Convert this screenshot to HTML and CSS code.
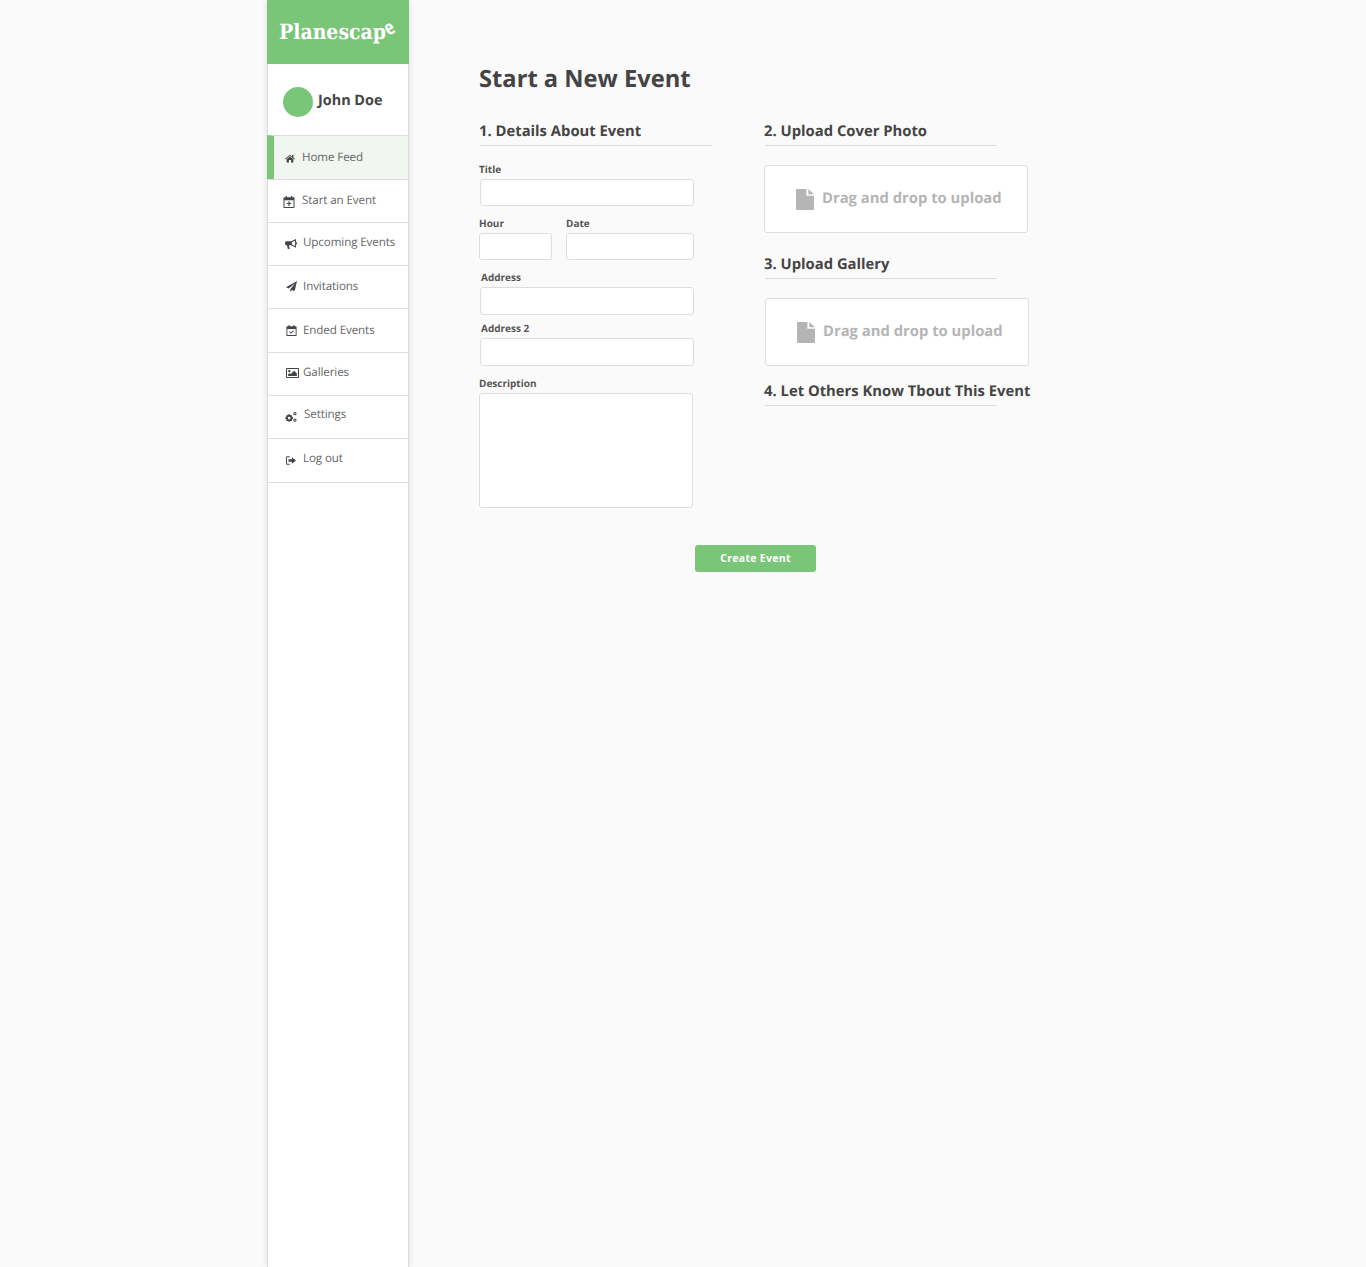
FILE: index.html
```html
<!DOCTYPE html>
<html lang="en">
<head>
    <meta charset="UTF-8">
    <title>Start a New Event</title>
    <link rel="stylesheet" href="styles.css">
</head>
<body>
    <div class="page">
        <aside class="sidebar">
            <div class="logo">Planescap<span class="logo-e">e</span></div>
            <div class="user">
                <span class="avatar"></span>
                <span class="user-name">John Doe</span>
            </div>
            <nav class="nav">
                <a class="nav-item item-home">
                    <svg class="icon" viewBox="0 0 14 12"><path d="M7 .6 0 6.500l.7.8L7 2l6.300 5.300.7-.8-2.200-1.900V1.200h-1.900v2L7 .6zM2.300 7.100V11.500h3.200V8.200h3V11.500h3.200V7.100L7 3.200 2.300 7.100z"/></svg>
                    Home Feed
                </a>
                <a class="nav-item item-start">
                    <svg class="icon" viewBox="0 0 12 13"><path fill-rule="evenodd" d="M2.500 0h1.300v1.400h4.400V0h1.300v1.400H11q1 0 1 1V12q0 1-1 1H1q-1 0-1-1V2.400q0-1 1-1h1.500V0zM1.100 4.600V11.900H10.900V4.600H1.100zM5.400 5.800H6.600V7.700H8.500V8.800H6.600V10.700H5.400V8.800H3.500V7.700H5.400V5.800z"/></svg>
                    Start an Event
                </a>
                <a class="nav-item item-upcoming">
                    <svg class="icon" viewBox="0 0 13 11"><path fill-rule="evenodd" d="M12 0 6.500 2.600H1.500Q0 2.600 0 4v1.500Q0 6.800 1.500 6.800H2L3 11H5L4.300 6.800H6.500L12 9.500zM11 1.800V7.800L7.500 6.100V3.400z"/><rect x="12" y="3.500" width="1" height="2.500"/></svg>
                    Upcoming Events
                </a>
                <a class="nav-item item-invitations">
                    <svg class="icon" viewBox="0 0 12 12"><path d="M12 0 0 6.900l3 1.300 7.200-6.100L4.700 9v3l1.900-2.300 2.900 1.200L12 0z"/></svg>
                    Invitations
                </a>
                <a class="nav-item item-ended">
                    <svg class="icon" viewBox="0 0 12 13"><path fill-rule="evenodd" d="M2.500 0h1.300v1.400h4.400V0h1.300v1.400H11q1 0 1 1V12q0 1-1 1H1q-1 0-1-1V2.400q0-1 1-1h1.500V0zM1.100 4.600V11.900H10.900V4.600H1.100zM3.200 8.200l.8-.8 1.400 1.400 2.700-2.700.8.800-3.500 3.500z"/></svg>
                    Ended Events
                </a>
                <a class="nav-item item-galleries">
                    <svg class="icon" viewBox="0 0 13 10"><path fill-rule="evenodd" d="M1 0H12Q13 0 13 1V9Q13 10 12 10H1Q0 10 0 9V1Q0 0 1 0zM1 1.100V8.900H12V1.100H1zM3.300 1.900A1.200 1.200 0 1 1 3.300 4.300 1.200 1.200 0 0 1 3.300 1.900zM2.100 7.900V6.500L3.700 5 4.800 6.100 8.100 2.800 10.900 5.600V7.900z"/></svg>
                    Galleries
                </a>
                <a class="nav-item item-settings">
                    <svg class="icon" viewBox="0 0 13 11"><path fill-rule="evenodd" d="M3.600 2.500H5.400L5.700 3.700 6.800 3.200 8 4.400 7.500 5.400 8.700 5.800V7.500L7.500 7.900 8 9 6.800 10.200 5.700 9.600 5.400 10.800H3.600L3.300 9.600 2.200 10.200 1 9 1.500 7.900.3 7.500V5.800L1.500 5.400 1 4.400 2.200 3.200 3.300 3.700zM4.500 5.200A1.500 1.500 0 1 0 4.500 8.200 1.500 1.500 0 0 0 4.500 5.200z"/><path fill-rule="evenodd" d="M10.800 0A1.800 1.800 0 1 1 10.800 3.600 1.800 1.800 0 0 1 10.800 0zM10.800 1.100A.7.7 0 1 0 10.800 2.500 .7.7 0 0 0 10.800 1.100zM10.800 7.200A1.800 1.800 0 1 1 10.800 10.800 1.800 1.800 0 0 1 10.800 7.200zM10.800 8.300A.7.7 0 1 0 10.800 9.700 .7.7 0 0 0 10.800 8.300z"/></svg>
                    Settings
                </a>
                <a class="nav-item item-logout">
                    <svg class="icon" viewBox="0 0 12 10"><path fill-rule="evenodd" d="M1.500 0H4.500V1.100H1.800Q1.100 1.100 1.100 1.800V8.200Q1.100 8.900 1.800 8.900H4.500V10H1.500Q0 10 0 8.500V1.500Q0 0 1.500 0z"/><path d="M7 1.200 12 5 7 8.800V6.500H3V3.500H7z"/></svg>
                    Log out
                </a>
            </nav>
        </aside>

        <main class="main">
            <h1 class="page-title">Start a New Event</h1>
            <div class="columns">
                <form class="details">
                    <h2 class="section-title">1. Details About Event</h2>

                    <label class="field field-title">
                        <span class="field-label">Title</span>
                        <input class="input" type="text">
                    </label>

                    <div class="field-row">
                        <label class="field field-hour">
                            <span class="field-label">Hour</span>
                            <input class="input" type="text">
                        </label>
                        <label class="field field-date">
                            <span class="field-label">Date</span>
                            <input class="input" type="text">
                        </label>
                    </div>

                    <label class="field field-address">
                        <span class="field-label">Address</span>
                        <input class="input" type="text">
                    </label>

                    <label class="field field-address2">
                        <span class="field-label">Address 2</span>
                        <input class="input" type="text">
                    </label>

                    <label class="field field-description">
                        <span class="field-label">Description</span>
                        <textarea class="input textarea"></textarea>
                    </label>
                </form>

                <div class="uploads">
                    <h2 class="section-title">2. Upload Cover Photo</h2>
                    <div class="dropzone">
                        <svg class="file-icon" viewBox="0 0 19 22"><path d="M1 0H11V7H19V21Q19 22 18 22H1Q0 22 0 21V1Q0 0 1 0zM13 0 19 5.500H13z"/></svg>
                        Drag and drop to upload
                    </div>

                    <h2 class="section-title section-gallery">3. Upload Gallery</h2>
                    <div class="dropzone dropzone-gallery">
                        <svg class="file-icon" viewBox="0 0 19 22"><path d="M1 0H11V7H19V21Q19 22 18 22H1Q0 22 0 21V1Q0 0 1 0zM13 0 19 5.500H13z"/></svg>
                        Drag and drop to upload
                    </div>

                    <h2 class="section-title section-share">4. Let Others Know Tbout This Event</h2>
                </div>
            </div>
            <button class="btn-create" type="button">Create Event</button>
        </main>
    </div>
</body>
</html>
```

FILE: styles.css
```css
* {
    box-sizing: border-box;
}
body {
    margin: 0;
    background-color: #fafafa;
    color: #444;
    font-family: "Open Sans", sans-serif;
    text-rendering: geometricPrecision;
}
.page {
    display: flex;
    min-height: 1267px;
    padding-left: 267px;
}

/* sidebar */
.sidebar {
    width: 142px;
    background: white;
    border-left: 1px solid #ddd;
    border-right: 1px solid #ddd;
    box-shadow: 0 0 6px rgba(0, 0, 0, 0.12);
}
.logo {
    height: 64px;
    margin: 0 -1px;
    padding-left: 12px;
    background-color: #7ac678;
    color: white;
    font-family: "DejaVu Serif Condensed", "DejaVu Serif", serif;
    font-stretch: condensed;
    font-weight: bold;
    font-size: 21px;
    line-height: 63px;
    white-space: nowrap;
}
.logo-e {
    display: inline-block;
    margin-left: 1px;
    transform: rotate(-30deg) translateY(-5px);
    font-family: "Open Sans", sans-serif;
    font-size: 20px;
    line-height: 18px;
}
.user {
    display: flex;
    align-items: center;
    height: 71px;
    padding-left: 15px;
    gap: 5px;
}
.avatar {
    width: 30px;
    height: 30px;
    margin-top: 4px;
    border-radius: 50%;
    background-color: #7ac678;
}
.user-name {
    margin-top: 2px;
    font-size: 14.4px;
    font-weight: bold;
    color: #444;
}
.nav-item {
    display: flex;
    align-items: center;
    height: 43px;
    border-top: 1px solid #ddd;
    font-size: 11.6px;
    letter-spacing: -0.1px;
    color: #666;
}
.icon {
    flex-shrink: 0;
    fill: #444;
}
.item-home {
    height: 44px;
    margin-left: -1px;
    padding: 0 0 1px 11px;
    border-left: 7px solid #7ac678;
    background-color: #f1f6f1;
}
.item-home .icon {
    width: 10px;
    height: 9px;
    margin: 2px 7px 0 0;
}
.item-start {
    padding: 0 0 1px 15px;
}
.item-start .icon {
    width: 12px;
    height: 12px;
    margin: 2px 7px 0 0;
}
.item-upcoming {
    padding: 0 0 4px 17px;
}
.item-upcoming .icon {
    width: 12px;
    height: 10px;
    margin: 4px 6px 0 0;
}
.item-invitations {
    padding: 0 0 2px 18px;
}
.item-invitations .icon {
    width: 11px;
    height: 11px;
    margin: 1px 6px 0 0;
}
.item-ended {
    height: 44px;
    padding: 0 0 1px 18px;
}
.item-ended .icon {
    width: 11px;
    height: 11px;
    margin: 1px 6px 0 0;
}
.item-galleries {
    padding: 0 0 4px 18px;
}
.item-galleries .icon {
    width: 13px;
    height: 10px;
    margin: 2px 4px 0 0;
}
.item-settings {
    padding: 0 0 6px 17px;
}
.item-settings .icon {
    width: 12px;
    height: 10px;
    margin: 5px 7px 0 0;
}
.item-logout {
    height: 45px;
    padding: 0 0 5px 18px;
    border-bottom: 1px solid #ddd;
}
.item-logout .icon {
    width: 10px;
    height: 9px;
    margin: 5px 7px 0 0;
}

/* main */
.main {
    width: 620px;
    padding: 63px 0 0 70px;
}
.page-title {
    margin: 0 0 28px;
    font-size: 23.7px;
    line-height: 30px;
    font-weight: bold;
    color: #444;
}
.columns {
    display: flex;
    gap: 52px;
}
.details {
    width: 233px;
}
.section-title {
    width: 232px;
    margin: 0 0 0 1px;
    padding-bottom: 4px;
    border-bottom: 1px solid #ddd;
    font-size: 14.8px;
    line-height: 20px;
    font-weight: bold;
    color: #444;
    text-indent: -1px;
    white-space: nowrap;
}
.field {
    display: block;
}
.field-label {
    display: block;
    font-size: 10px;
    line-height: 14px;
    font-weight: bold;
    color: #555;
    margin-bottom: 3px;
}
.input {
    display: block;
    width: 214px;
    height: 28px;
    padding: 0 8px;
    background: white;
    border: 1px solid #ddd;
    border-radius: 3px;
}
.field-title {
    margin-top: 16px;
}
.field-title .input,
.field-address .input,
.field-address2 .input {
    margin-left: 1px;
}
.field-title .input {
    height: 27px;
}
.field-row {
    display: flex;
    gap: 14px;
    margin-top: 10px;
}
.field-hour .input {
    width: 73px;
    height: 27px;
}
.field-date .input {
    width: 128px;
    height: 27px;
}
.field-address {
    margin-top: 10px;
}
.field-address .field-label,
.field-address2 .field-label {
    margin-left: 2px;
}
.field-address2 {
    margin-top: 6px;
}
.field-description {
    margin-top: 10px;
}
.textarea {
    height: 115px;
    resize: none;
}

.uploads {
    width: 270px;
}
.dropzone {
    display: flex;
    align-items: center;
    width: 264px;
    height: 68px;
    margin-top: 19px;
    padding: 0 0 2px 31px;
    background: white;
    border: 1px solid #ddd;
    border-radius: 3px;
    font-size: 14.8px;
    font-weight: bold;
    color: #b5b5b5;
}
.dropzone-gallery {
    margin-left: 1px;
}
.file-icon {
    width: 18px;
    height: 21px;
    margin: 2px 8px 0 0;
    fill: #b5b5b5;
}
.section-gallery {
    margin-top: 21px;
}
.section-share {
    margin-top: 15px;
}
.btn-create {
    display: block;
    width: 121px;
    height: 27px;
    margin: 37px 0 0 216px;
    padding-bottom: 2px;
    background-color: #7ac678;
    color: white;
    border: none;
    border-radius: 3px;
    font-family: "Open Sans", sans-serif;
    font-size: 10.5px;
    font-weight: bold;
    letter-spacing: 0.3px;
}
```
